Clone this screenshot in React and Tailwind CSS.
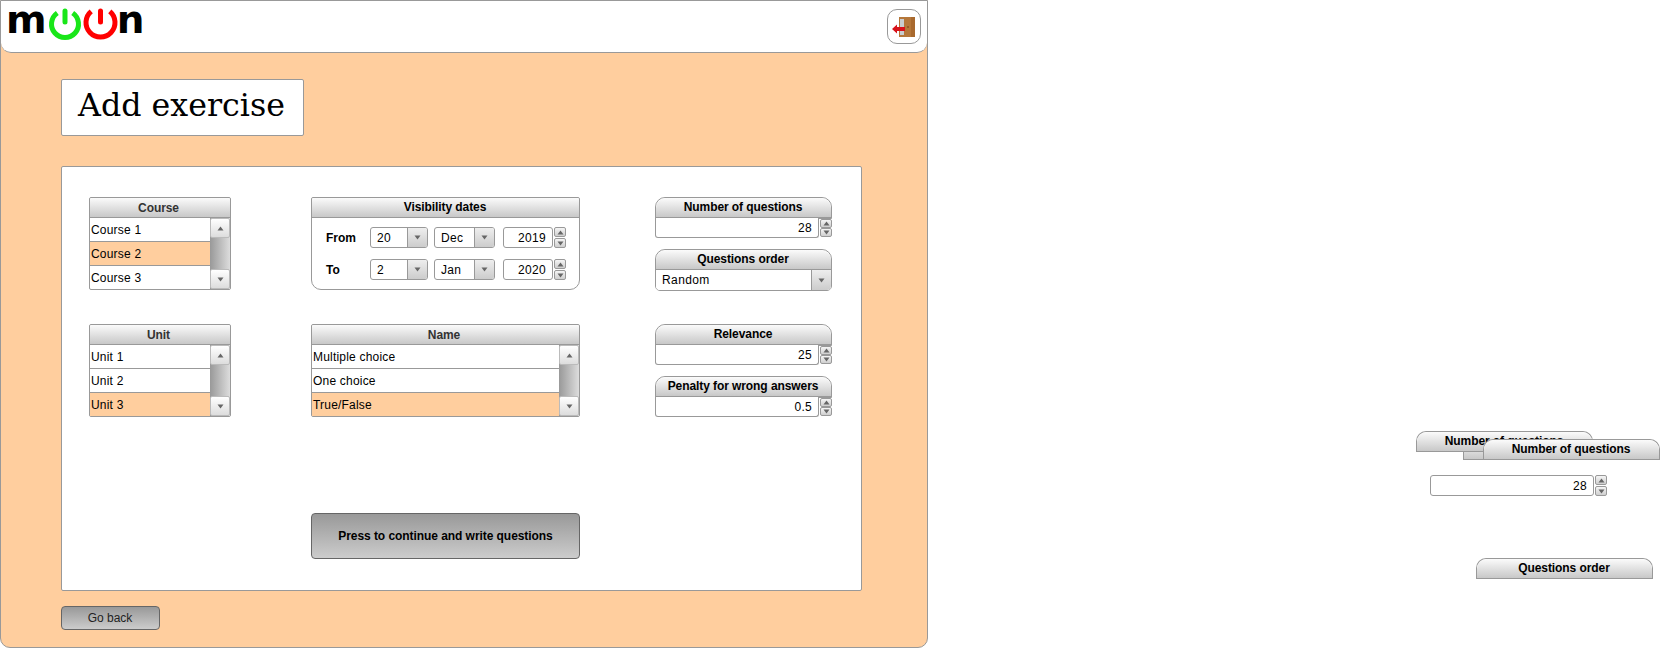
import React from 'react'

function PanelHeader({ title, round = 'rounded-t-[2px]', color = 'text-black', nudge = 'pb-[1px] pr-[1px]' }) {
  return (
    <div className={`h-[20px] border-b border-[#999] bg-linear-to-b from-[#fbfbfb] to-[#c8c8c8] ${round} ${nudge} flex items-center justify-center text-[12px] font-bold tracking-[-0.08px] ${color}`}>
      {title}
    </div>
  )
}

function Arrow({ up }) {
  return (
    <svg width="7" height="5" viewBox="0 0 7 5" className="block">
      <path d={up ? 'M3.5 0.5 L6.5 4.5 L0.5 4.5 Z' : 'M0.5 0.5 L6.5 0.5 L3.5 4.5 Z'} fill="#666" />
    </svg>
  )
}

function SpinButtons({ small }) {
  const btn = `flex ${small ? 'h-[9px]' : 'h-[10px]'} items-center justify-center rounded-[2px] border border-[#999] bg-linear-to-b from-[#f5f5f5] to-[#cfcfcf]`
  return (
    <div className={`flex ${small ? 'mt-[1px] h-[18px]' : 'h-[21px]'} w-[12px] flex-col justify-between`}>
      <div className={btn}><Arrow up /></div>
      <div className={btn}><Arrow /></div>
    </div>
  )
}

function ListBox({ title, items, selected }) {
  return (
    <div className="w-full rounded-[2px] border border-[#999] bg-white">
      <PanelHeader title={title} color="text-[#333]" nudge="pr-[3px]" />
      <div className="flex">
        <div className="min-w-0 flex-1">
          {items.map((item, i) => (
            <div
              key={item}
              className={`flex items-center pl-[1px] text-[12px] tracking-[0.2px] text-black ${i < items.length - 1 ? 'h-[24px] border-b border-[#999]' : 'h-[23px]'} ${i === selected ? 'bg-[#ffce9e]' : ''}`}
            >
              {item}
            </div>
          ))}
        </div>
        <div className="flex w-[20px] flex-col bg-linear-to-r from-[#999] to-[#ddd]">
          <div className="flex h-[20px] items-center justify-center rounded-[2px] border border-[#bbb] bg-linear-to-b from-white to-[#ddd]"><Arrow up /></div>
          <div className="flex-1" />
          <div className="flex h-[20px] items-center justify-center rounded-[2px] border border-[#bbb] bg-linear-to-b from-white to-[#ddd]"><Arrow /></div>
        </div>
      </div>
    </div>
  )
}

function SmallSelect({ value, w }) {
  return (
    <div className={`flex h-[21px] ${w} items-stretch overflow-hidden rounded-[3px] border border-[#999] bg-white`}>
      <div className="flex flex-1 items-center pl-[6px] text-[12px] tracking-[0.3px] text-black">{value}</div>
      <div className="flex w-[20px] items-center justify-center border-l border-[#999] bg-linear-to-b from-[#eee] to-[#ccc]"><Arrow /></div>
    </div>
  )
}

function NumberField({ value, w = 'w-[50px]', h = 'h-[21px]' }) {
  return (
    <div className={`flex ${h} ${w} items-center justify-end rounded-[3px] border border-[#999] bg-white pr-[6px] text-[12px] tracking-[0.3px] text-black`}>
      {value}
    </div>
  )
}

function DateRow({ label, day, month, year }) {
  return (
    <div className="flex items-center">
      <div className="w-[44px] text-[12px] font-bold text-black">{label}</div>
      <SmallSelect value={day} w="w-[58px]" />
      <div className="w-[6px]" />
      <SmallSelect value={month} w="w-[61px]" />
      <div className="w-[8px]" />
      <NumberField value={year} />
      <div className="w-[1px]" />
      <SpinButtons />
    </div>
  )
}

function NumberCard({ title, value }) {
  return (
    <div className="w-[177px]">
      <div className="rounded-t-[10px] border border-[#999]">
        <PanelHeader title={title} round="rounded-t-[10px]" />
      </div>
      <div className="-mt-px flex justify-between">
        <NumberField value={value} w="w-[164px] rounded-t-none border-t-0" h="h-[20px]" />
        <SpinButtons small />
      </div>
    </div>
  )
}

function FloatTab({ title, className }) {
  return (
    <div className={`absolute w-[177px] rounded-t-[10px] border border-b-0 border-[#999] bg-white ${className}`}>
      <PanelHeader title={title} round="rounded-t-[10px]" />
    </div>
  )
}

function Logo() {
  return (
    <div className="flex items-start pl-[5px]">
      <span className="text-[39px] font-bold leading-[46px] text-black [font-family:'DejaVu_Sans',sans-serif]">m</span>
      <svg width="36" height="34" viewBox="0 0 36 34" className="mt-[11px]">
        <path d="M10.3 4.94 A13.5 13.5 0 1 0 25.7 4.94" fill="none" stroke="#19e619" strokeWidth="5" />
        <path d="M18 3 V14" stroke="#19e619" strokeWidth="5" strokeLinecap="round" />
      </svg>
      <svg width="35" height="34" viewBox="0 0 35 34" className="mt-[11px]">
        <path d="M8.2 3.4 A14.5 14.5 0 1 0 26.8 3.4" fill="none" stroke="#ff0000" strokeWidth="5" />
        <path d="M17.5 3 V14" stroke="#ff0000" strokeWidth="5" strokeLinecap="round" />
      </svg>
      <span className="-ml-[1px] text-[39px] font-bold leading-[46px] text-black [font-family:'DejaVu_Sans',sans-serif]">n</span>
    </div>
  )
}

function DoorIcon() {
  return (
    <svg width="26" height="22" viewBox="0 0 26 22">
      <rect x="8" y="1" width="16" height="20" fill="#b5773a" />
      <rect x="9" y="3" width="4" height="16" fill="#c9cdd0" />
      <rect x="20" y="1" width="4" height="20" fill="#a8692e" />
      <circle cx="17" cy="11" r="0.8" fill="#6b3d14" />
      <path d="M1 13 L6 8.500 V11 H14 V15 H6 V17.500 Z" fill="#d8121a" />
    </svg>
  )
}

export default function App() {
  return (
    <div className="relative h-[648px] w-[1660px] overflow-hidden bg-white font-['Liberation_Sans',Arial,sans-serif]">
      <div className="flex h-[648px] w-[928px] flex-col rounded-b-[10px] border border-[#999] bg-[#ffce9e]">
        <header className="flex h-[52px] items-start justify-between rounded-b-[10px] border-b border-[#999] bg-white pr-[6px]">
          <div className="-mt-[4px]">
            <Logo />
          </div>
          <button className="mt-[8px] flex h-[35px] w-[34px] items-center justify-center rounded-[10px] border border-[#999] bg-white">
            <DoorIcon />
          </button>
        </header>

        <main className="flex-1 pl-[60px]">
          <div className="mt-[26px] flex h-[57px] w-[243px] items-center justify-center rounded-[2px] border border-[#999] bg-white pb-[3px] pr-[2px] text-[31.7px] text-black [font-family:'DejaVu_Serif',serif]">
            Add exercise
          </div>

          <div className="mt-[30px] h-[425px] w-[801px] rounded-[2px] border border-[#999] bg-white pl-[27px] pt-[30px]">
            <div className="grid grid-cols-[142px_269px_177px] gap-x-[80px]">
              <div>
                <ListBox title="Course" items={['Course 1', 'Course 2', 'Course 3']} selected={1} />
              </div>

              <div className="h-[93px] rounded-b-[10px] rounded-t-[2px] border border-[#999]">
                <PanelHeader title="Visibility dates" />
                <div className="flex flex-col gap-[11px] pl-[14px] pt-[9px]">
                  <DateRow label="From" day="20" month="Dec" year="2019" />
                  <DateRow label="To" day="2" month="Jan" year="2020" />
                </div>
              </div>

              <div className="-ml-[5px] flex flex-col gap-[11px]">
                <NumberCard title="Number of questions" value="28" />
                <div className="w-[177px] overflow-hidden rounded-[5px] rounded-t-[10px] border border-[#999]">
                  <PanelHeader title="Questions order" round="rounded-t-[10px]" />
                  <div className="flex h-[20px] bg-white">
                    <div className="flex flex-1 items-center pl-[6px] text-[12px] tracking-[0.4px] text-black">Random</div>
                    <div className="flex w-[20px] items-center justify-center border-l border-[#999] bg-linear-to-b from-[#eee] to-[#ccc]"><Arrow /></div>
                  </div>
                </div>
              </div>

              <div className="mt-[33px]">
                <ListBox title="Unit" items={['Unit 1', 'Unit 2', 'Unit 3']} selected={2} />
              </div>
              <div className="mt-[33px]">
                <ListBox title="Name" items={['Multiple choice', 'One choice', 'True/False']} selected={2} />
              </div>
              <div className="-ml-[5px] mt-[33px] flex flex-col gap-[11px]">
                <NumberCard title="Relevance" value="25" />
                <NumberCard title="Penalty for wrong answers" value="0.5" />
              </div>

              <div className="col-start-2 mt-[96px]">
                <button className="flex h-[46px] w-[269px] items-center justify-center rounded-[4px] border border-[#666] bg-linear-to-b from-[#999] to-[#ccc] pb-[1px] text-[12px] font-bold tracking-[-0.06px] text-black">
                  Press to continue and write questions
                </button>
              </div>
            </div>
          </div>

          <button className="mt-[15px] flex h-[24px] w-[99px] items-center justify-center rounded-[4px] border border-[#666] bg-linear-to-b from-[#999] to-[#ccc] pr-[1px] text-[12px] text-[#222]">
            Go back
          </button>
        </main>
      </div>

      <FloatTab title="" className="left-[1463px] top-[439px]" />
      <FloatTab title="Number of questions" className="left-[1416px] top-[431px]" />
      <FloatTab title="Number of questions" className="left-[1483px] top-[439px]" />
      <div className="absolute left-[1430px] top-[475px] flex gap-[1px]">
        <NumberField value="28" w="w-[164px]" />
        <SpinButtons />
      </div>
      <FloatTab title="Questions order" className="left-[1476px] top-[558px]" />
    </div>
  )
}
